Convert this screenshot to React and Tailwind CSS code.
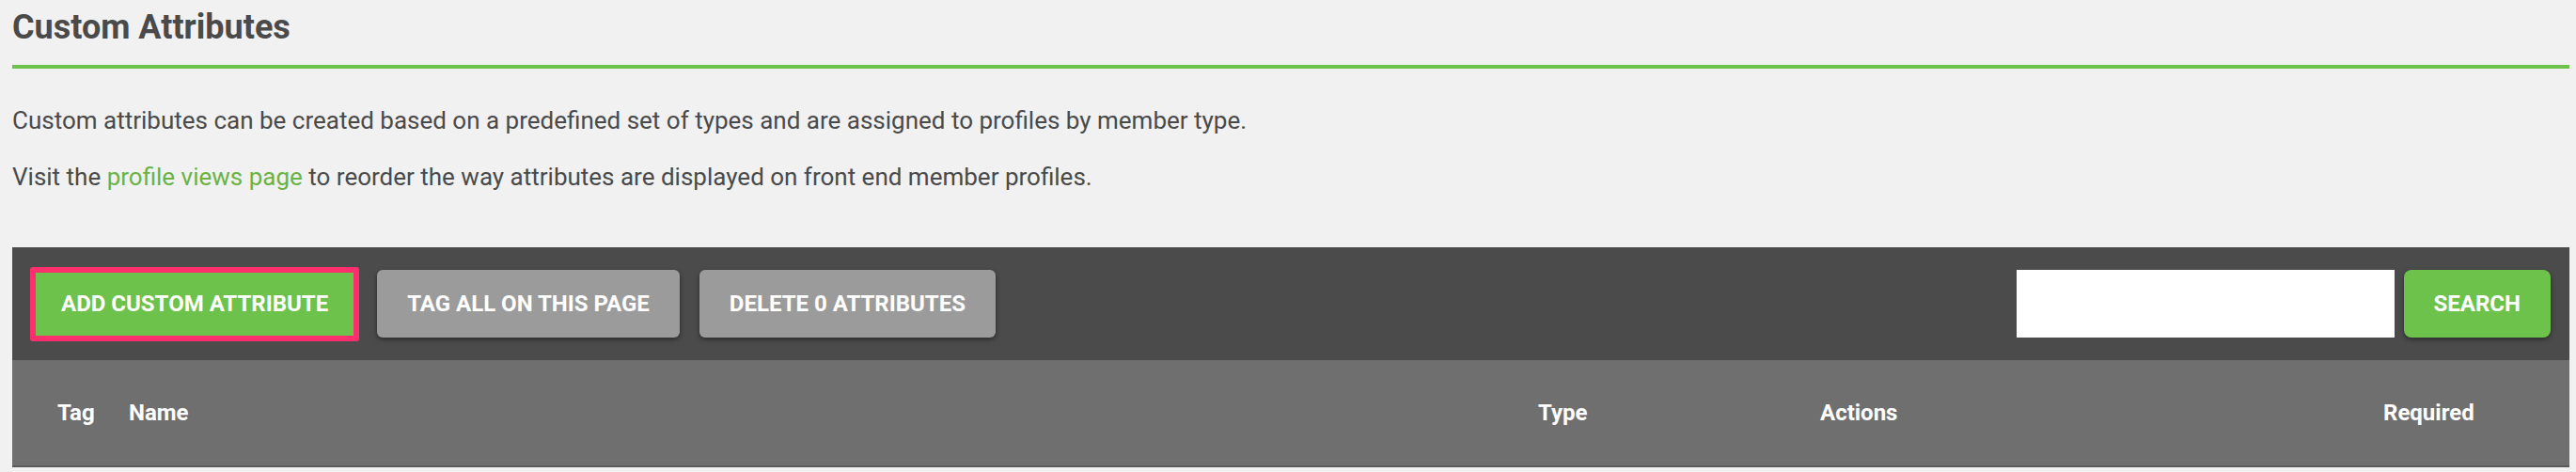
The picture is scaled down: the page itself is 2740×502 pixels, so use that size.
import React from 'react';

const font = { fontFamily: 'Roboto, "Open Sans", sans-serif' };

const GrayButton = ({ children }) => (
  <button className="h-[72px] rounded-[6px] bg-[#9b9b9b] px-[32px] text-[24px] font-bold uppercase text-white shadow-[0_2px_5px_rgba(0,0,0,0.45)]">
    {children}
  </button>
);

const App = () => {
  return (
    <div className="min-h-screen bg-[#f1f1f1] pl-[13px] pr-[7px] text-[#4a4a4a]" style={font}>
      <h1 className="pt-[7px] text-[36px] font-bold leading-[44px] text-[#4a4a4a]">Custom Attributes</h1>
      <div className="mt-[18px] h-[4px] bg-[#6cc24a]" />

      <p className="mt-[36px] text-[26px] leading-[39px]">
        Custom attributes can be created based on a predefined set of types and are assigned to profiles by member type.
      </p>
      <p className="mt-[21px] text-[26px] leading-[39px]">
        Visit the{' '}
        <a href="#" className="text-[#6ab344]">
          profile views page
        </a>{' '}
        to reorder the way attributes are displayed on front end member profiles.
      </p>

      <div className="mt-[55px] bg-white">
        {/* toolbar */}
        <div className="flex h-[120px] items-center bg-[#4b4b4b] pl-[19px] pr-[20px]">
          <button className="h-[79px] rounded-[3px] border-[6px] border-[#ff2f6e] bg-[#6cc24a] px-[27px] text-[24px] font-bold uppercase text-white">
            Add Custom Attribute
          </button>
          <div className="ml-[19px] flex gap-[21px]">
            <GrayButton>Tag All On This Page</GrayButton>
            <GrayButton>Delete 0 Attributes</GrayButton>
          </div>
          <div className="ml-auto flex items-center gap-[10px]">
            <input type="text" className="h-[72px] w-[402px] bg-white outline-none" />
            <button className="h-[72px] rounded-[8px] bg-[#6cc24a] px-[32px] text-[24px] font-bold uppercase text-white shadow-[0_2px_5px_rgba(0,0,0,0.45)]">
              Search
            </button>
          </div>
        </div>

        {/* table header */}
        <div className="flex h-[114px] items-center border-b-[2px] border-[#5a5a5a] bg-[#6f6f6f] pl-[48px] text-[24px] font-bold text-white">
          <div className="w-[76px]">Tag</div>
          <div className="w-[1499px]">Name</div>
          <div className="w-[300px]">Type</div>
          <div className="w-[599px]">Actions</div>
          <div>Required</div>
        </div>
      </div>
    </div>
  );
};

export default App;
